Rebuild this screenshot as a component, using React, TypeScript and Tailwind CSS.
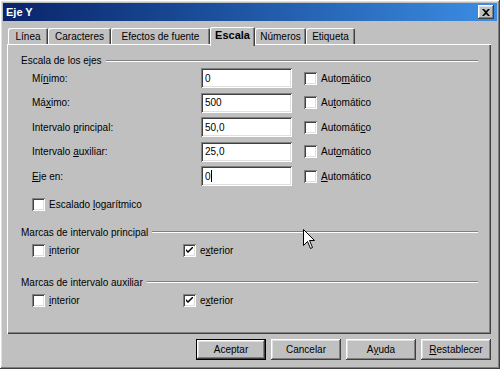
const raised =
  "shadow-[inset_-1px_-1px_0_#404040,inset_1px_1px_0_#ffffff,inset_-2px_-2px_0_#808080,inset_2px_2px_0_#dfdfdf]";
const sunken =
  "shadow-[inset_1px_1px_0_#808080,inset_-1px_-1px_0_#ffffff,inset_2px_2px_0_#404040,inset_-2px_-2px_0_#dfdfdf]";

function U({ children }: { children: string }) {
  return <span className="underline underline-offset-[1px]">{children}</span>;
}

function Check({ checked = false }: { checked?: boolean }) {
  return (
    <div className={`w-[13px] h-[13px] bg-white shrink-0 flex items-center justify-center ${sunken}`}>
      {checked && (
        <svg width="7" height="7" viewBox="0 0 7 7">
          <path d="M0 2 L0 4 L2 6 L7 1 L7 -1 L2 4 Z" fill="#000" />
        </svg>
      )}
    </div>
  );
}

function Legend({ children }: { children: React.ReactNode }) {
  return (
    <div className="flex items-center h-[13px] pl-[14px] pr-[13px]">
      <span className="whitespace-nowrap">{children}</span>
      <div className="flex-1 ml-[4px] h-[2px] border-t border-t-[#808080] border-b border-b-white" />
    </div>
  );
}

type RowType = {
  label: React.ReactNode;
  value: string;
  auto: React.ReactNode;
  caret?: boolean;
};

function Row({ label, value, auto, caret }: RowType) {
  return (
    <div className="flex items-center h-[20px]">
      <div className="w-[194px] pl-[25px]">{label}</div>
      <div className={`w-[91px] h-[20px] bg-white flex items-center px-[4px] ${sunken}`}>
        <span>{value}</span>
        {caret && <span className="w-[1px] h-[12px] bg-black" />}
      </div>
      <div className="ml-[12px] flex items-center gap-[4px]">
        <Check />
        <span>{auto}</span>
      </div>
    </div>
  );
}

function Tab({ label, w, active = false }: { label: string; w: number; active?: boolean }) {
  return (
    <div
      style={{ width: w }}
      className={`flex items-center justify-center rounded-t-[2px] shadow-[inset_1px_1px_0_#ffffff,inset_-1px_0_0_#404040,inset_-2px_0_0_#808080] ${
        active ? "h-[19px] -mb-[2px] relative z-10 bg-[#c0c0c0] font-bold text-[11px] pb-[2px]" : "h-[16px]"
      }`}
    >
      {label}
    </div>
  );
}

function Btn({ children, def = false }: { children: React.ReactNode; def?: boolean }) {
  return (
    <div className={`w-[70px] h-[21px] ${def ? "border border-black" : ""}`}>
      <div className={`w-full h-full flex items-center justify-center ${raised}`}>{children}</div>
    </div>
  );
}

export default function App() {
  return (
    <div
      className={`w-[500px] h-[369px] bg-[#c0c0c0] p-[3px] flex flex-col text-[10px] text-black relative overflow-hidden ${raised}`}
      style={{ fontFamily: '"Liberation Sans", Arial, sans-serif' }}
    >
      <div className="h-[18px] flex items-center justify-between pl-[3px] pr-[3px] bg-gradient-to-r from-[#0a246a] to-[#3c8ee4]">
        <span className="text-white font-bold text-[11px]">Eje Y</span>
        <div className={`w-[16px] h-[14px] bg-[#c0c0c0] flex items-center justify-center ${raised}`}>
          <svg width="8" height="7" viewBox="0 0 8 7">
            <path d="M0 0 L2 0 L4 2 L6 0 L8 0 L5 3.5 L8 7 L6 7 L4 5 L2 7 L0 7 L3 3.5 Z" fill="#000" />
          </svg>
        </div>
      </div>

      <div className="flex items-end mt-[6px] pl-[5px] h-[17px]">
        <Tab label="Línea" w={40} />
        <Tab label="Caracteres" w={63} />
        <Tab label="Efectos de fuente" w={99} />
        <Tab label="Escala" w={45} active />
        <Tab label="Números" w={51} />
        <Tab label="Etiqueta" w={49} />
      </div>

      <div className="ml-[4px] w-[484px] h-[290px] pt-[10px] shadow-[inset_1px_1px_0_#ffffff,inset_-1px_-1px_0_#404040,inset_-2px_-2px_0_#808080]">
        <Legend>Escala de los ejes</Legend>
        <div className="flex flex-col gap-[4.5px] mt-[1px]">
          <Row label={<>Mí<U>n</U>imo:</>} value="0" auto={<>Auto<U>m</U>ático</>} />
          <Row label={<>Má<U>x</U>imo:</>} value="500" auto={<>Au<U>t</U>omático</>} />
          <Row label={<>Intervalo <U>p</U>rincipal:</>} value="50,0" auto={<>Automáti<U>c</U>o</>} />
          <Row label={<>Intervalo <U>a</U>uxiliar:</>} value="25,0" auto={<>Aut<U>o</U>mático</>} />
          <Row label={<><U>E</U>je en:</>} value="0" caret auto={<><U>A</U>utomático</>} />
        </div>
        <div className="flex items-center gap-[4px] pl-[25px] mt-[12px] h-[13px]">
          <Check />
          <span>Escalado <U>l</U>ogarítmico</span>
        </div>
        <div className="mt-[14.5px]">
          <Legend>Marcas de intervalo principal</Legend>
        </div>
        <div className="flex items-center h-[13px] mt-[5.5px] pl-[25px]">
          <div className="w-[151px] flex items-center gap-[4px]">
            <Check />
            <span><U>i</U>nterior</span>
          </div>
          <div className="flex items-center gap-[4px]">
            <Check checked />
            <span>e<U>x</U>terior</span>
          </div>
        </div>
        <div className="mt-[18.5px]">
          <Legend>Marcas de intervalo auxiliar</Legend>
        </div>
        <div className="flex items-center h-[13px] mt-[5.5px] pl-[25px]">
          <div className="w-[151px] flex items-center gap-[4px]">
            <Check />
            <span><U>i</U>nterior</span>
          </div>
          <div className="flex items-center gap-[4px]">
            <Check checked />
            <span>e<U>x</U>terior</span>
          </div>
        </div>
      </div>

      <div className="flex justify-end gap-[5px] mt-[5px] pr-[6px]">
        <Btn def>Aceptar</Btn>
        <Btn>Cancelar</Btn>
        <Btn>A<U>y</U>uda</Btn>
        <Btn><U>R</U>establecer</Btn>
      </div>

      <svg className="absolute left-[303px] top-[229px]" width="12" height="20" viewBox="0 0 12 20">
        <path d="M0.5 0.5 L0.5 16.5 L4.5 12.5 L7.5 19.5 L9.5 18.5 L6.5 11.5 L11.5 11.5 Z" fill="#fff" stroke="#000" strokeWidth="1" />
      </svg>
    </div>
  );
}
